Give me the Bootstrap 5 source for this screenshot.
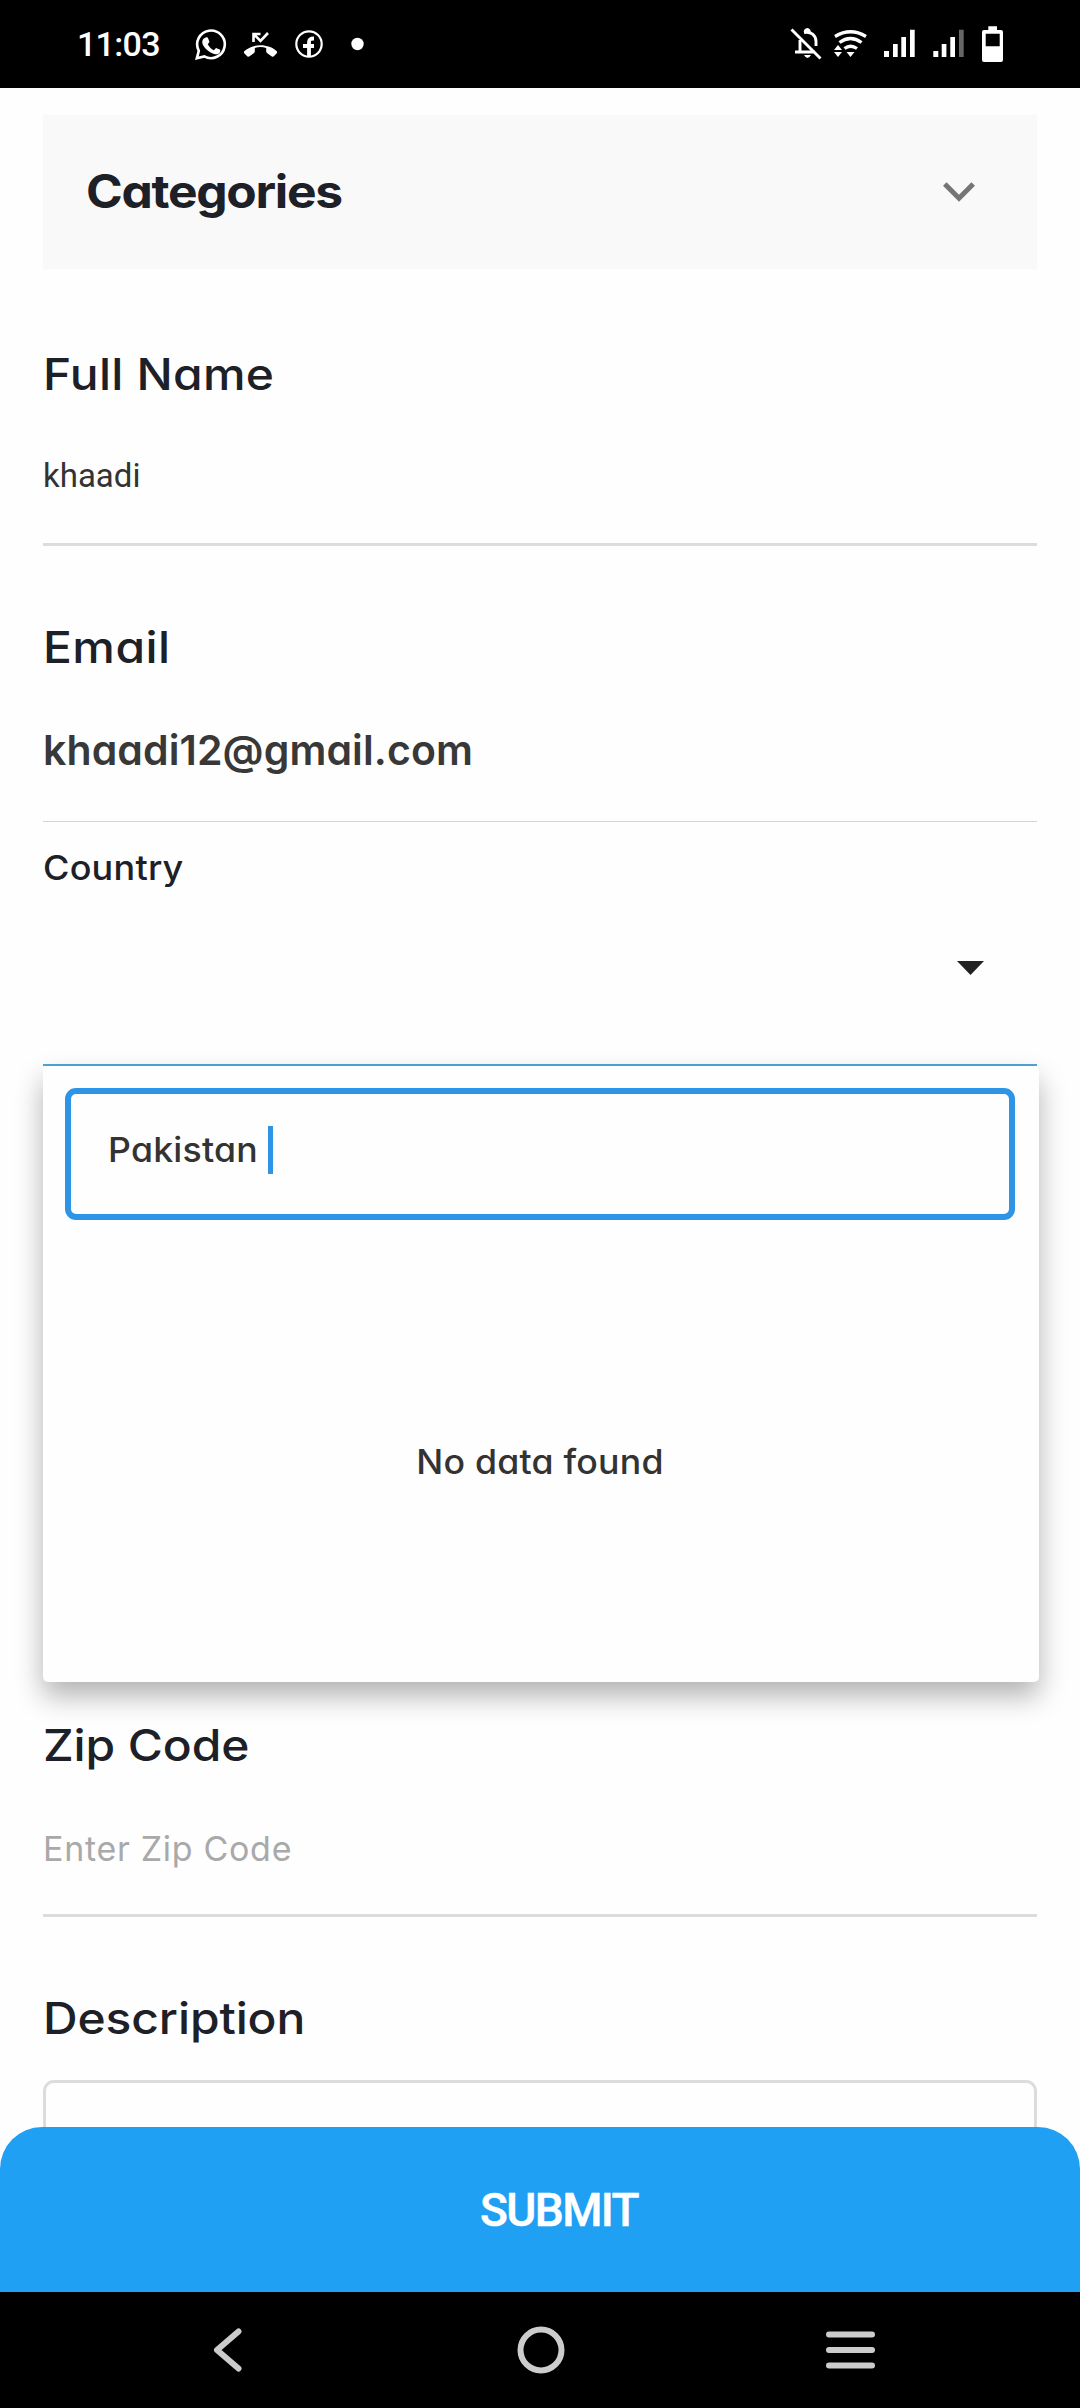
<!DOCTYPE html>
<html lang="en">
<head>
<meta charset="utf-8">
<meta name="viewport" content="width=device-width, initial-scale=1">
<title>Request form</title>
<link href="https://cdn.jsdelivr.net/npm/bootstrap@5.3.0/dist/css/bootstrap.min.css" rel="stylesheet">
<style>
  body { font-family: Inter, "Open Sans", sans-serif; font-feature-settings: "cv11"; background: #fefefe; color: #1d2027; height: 2408px; overflow: hidden; }
  input, button, textarea { font-feature-settings: inherit; }
  svg { display: block; flex: none; }
  .status-strip { height: 88px; padding-left: 77px; font-family: Roboto, sans-serif; background: #000; }
  .clock { font-size: 34px; line-height: 40px; font-weight: 500; letter-spacing: -.7px; width: 118px; }
  .screen { height: 2080px; padding: 27px 43px 0; overflow: hidden; }
  .category-box { height: 154px; background: #f9f9f9; padding: 0 62px 0 43px; }
  .category-title { font-size: 46px; font-weight: 700; letter-spacing: -1.2px; line-height: 60px; margin-bottom: 3px; transform: scaleX(1.08); transform-origin: left; }
  .field-label { display: block; font-size: 44px; line-height: 60px; font-weight: 500; margin: 71px 0 0; letter-spacing: -.1px; transform: scaleX(1.09); transform-origin: left; }
  .first-label { margin-top: 75px; letter-spacing: .2px; }
  .mail-label { letter-spacing: .4px; }
  .country-label { font-size: 34px; font-weight: 450; margin-top: 16px; letter-spacing: .2px; transform: scaleX(1.06); }
  .line-input, .line-input:focus { display: block; border: 0; border-bottom: 3px solid #dcdcdc; border-radius: 0; background: transparent; padding: 11px 0 4px; height: 142px; font-size: 34px; line-height: 50px; color: #333; box-shadow: none; letter-spacing: .7px; }
  .line-input.name-input { font-family: Roboto, sans-serif; font-size: 33px; letter-spacing: 0; padding: 9px 0 6px; }
  .line-input.mail-input { height: 145px; border-bottom: 1px solid #d5d6d7; padding: 1px 0 0; font-size: 41px; font-weight: 600; color: #383838; letter-spacing: .1px; }
  .line-input::placeholder { color: #a9a9a9; opacity: 1; }
  .country-select { height: 168px; border-bottom: 2px solid #4ea5dc; padding: 0 53px 26px 0; }
  .result-panel { top: 100%; left: 0; width: 996px; height: 616px; background: #fefefe; border-radius: 5px; padding: 22px 24px 0 22px; box-shadow: 0 14px 28px rgba(0,0,0,.3); z-index: 3; }
  .search-box { height: 132px; border: 6px solid #2e94e6; border-radius: 11px; padding: 0 37px 9px; font-size: 34px; font-weight: 500; color: #333; }
  .typed-text { transform: scaleX(1.05); transform-origin: left; letter-spacing: .2px; }
  .caret-bar { width: 5px; height: 48px; background: #2e94e6; margin-left: 17px; }
  .empty-note { font-size: 34px; font-weight: 500; line-height: 50px; color: #333; margin-top: 217px; letter-spacing: .2px; transform: scaleX(1.05); }
  .zip-label { margin-top: 649px; }
  .description-box { height: 300px; border: 3px solid #dcdcdc; border-radius: 11px; margin-top: 32px; resize: none; background: transparent; }
  .submit-bar { height: 165px; border: 0; border-radius: 42px 42px 0 0; background: #1fa0f3; color: #fff; font-family: Roboto, sans-serif; font-size: 46px; font-weight: 500; padding: 1px 0 0 38px; letter-spacing: -1.6px; -webkit-text-stroke: .5px #fff; }
  .system-nav { height: 116px; background: #000; padding: 0 205px 0 213px; }
  .home-ring { margin-left: 12px; }
</style>
</head>
<body>
<header class="status-strip text-white d-flex align-items-center">
  <span class="clock">11:03</span>
  <svg width="885" height="88" viewBox="195 0 885 88" fill="none" stroke="#fff">
    <path d="M196.800 58.300l2-7.500a13.800 13.800 0 1 1 5.500 5.600z" stroke-width="2.600"/>
    <path d="M206 38c2-1.500 3.500-1 4 .5l1.500 4-2 2.500c1.500 3 4 5.500 7 7l2.500-2.500c3 1.500 5 1.500 5 3-.5 4-4 4.500-6 4C211 55 204.500 49 203.300 44c-.4-3 .5-5 2.700-6z" transform="translate(25.500 5) scale(.87)" fill="#fff" stroke="none"/>
    <path d="M244.500 51c4-3.500 9.500-5.700 16-5.700s12 2.200 16 5.700c.8.800.8 1.700 0 2.500l-2.700 2.700c-.7.700-1.600.7-2.400.1l-4.400-3.200c-.6-.5-.8-1-.8-1.600V48c-3.800-1.200-7.600-1.200-11.400 0v3.500c0 .6-.2 1.100-.8 1.600l-4.400 3.200c-.8.600-1.700.6-2.400-.1l-2.700-2.700c-.8-.8-.8-1.700 0-2.500z" fill="#fff" stroke="none"/>
    <path d="M253.500 42V34h7M254 34.500l6.500 6.500 7.500-8" stroke-width="2.600"/>
    <circle cx="309" cy="44" r="12.700" stroke-width="2.200"/>
    <path d="M309 57V42.500c0-3.300 1.500-4 5-4M303 46h11" stroke-width="3.800"/>
    <circle cx="357.500" cy="44" r="6.200" fill="#fff" stroke="none"/>
    <path d="M791.500 29.500l29 29M795 52h20M800 51V40M804 32.500c7-1.500 12 3 12 9v4.500" stroke-width="2.900"/>
    <path d="M804 33v-3q3.500-4 6.500 0v3zM804 55h7q-3.500 6-7 0z" fill="#fff" stroke="none"/>
    <path d="M835 36.500q15.500-9.500 31 0M839.500 42.500q11-8 22 0M844.500 48.500q6-4.500 12.500 0" stroke-width="3.300"/>
    <path d="M846.500 52h8l-4 5zM834 50h8l-4-5zM834 52h8l-4 5z" fill="#fff" stroke="none"/>
    <g fill="#fff" stroke="none">
      <path d="M884 51h5v6h-5zM893 44h4.700v13H893zM901.300 37h4.700v20h-4.700zM910 29.700h4.700V57H910zM933.300 51h5v6h-5zM941.700 44h4.700v13h-4.700zM950.300 37h4.700v20h-4.700z"/>
      <path d="M959 29.700h4.700V57H959z" fill="#666"/>
      <path fill-rule="evenodd" d="M988.300 26.300h8.700V30h4q2 0 2 2v28q0 2-2 2h-17q-2 0-2-2V32q0-2 2-2h4.300zM985.700 33.700v12.500h14V33.700z"/>
    </g>
  </svg>
</header>

<main class="screen">
  <div class="category-box d-flex align-items-center justify-content-between">
    <span class="category-title">Categories</span>
    <svg width="32" height="20" viewBox="0 0 32 20"><path d="M1.800 2L16 16.200 30.200 2" fill="none" stroke="#757575" stroke-width="5"/></svg>
  </div>

  <form>
    <label class="field-label first-label" for="fullName">Full Name</label>
    <input id="fullName" class="form-control line-input name-input" value="khaadi">

    <label class="field-label mail-label" for="email">Email</label>
    <input id="email" class="form-control line-input mail-input" value="khaadi12@gmail.com">

    <div class="position-relative">
      <label class="field-label country-label">Country</label>
      <div class="country-select d-flex align-items-center justify-content-end">
        <svg width="27" height="14" viewBox="0 0 27 14"><path d="M0 0h27L13.500 14z" fill="#212121"/></svg>
      </div>
      <div class="result-panel position-absolute">
        <div class="search-box d-flex align-items-center"><span class="typed-text">Pakistan</span><span class="caret-bar"></span></div>
        <p class="empty-note text-center mb-0">No data found</p>
      </div>
    </div>

    <label class="field-label zip-label" for="zip">Zip Code</label>
    <input id="zip" class="form-control line-input" placeholder="Enter Zip Code">

    <label class="field-label" for="about">Description</label>
    <textarea id="about" class="form-control description-box"></textarea>
  </form>
</main>

<footer class="fixed-bottom">
  <button type="button" class="submit-bar d-block w-100 text-center">SUBMIT</button>
  <nav class="system-nav d-flex align-items-center justify-content-between">
    <svg width="30" height="48" viewBox="0 0 30 48"><path d="M25.500 5.500L4 24l21.500 18.500" fill="none" stroke="#ccc" stroke-width="6" stroke-linecap="round" stroke-linejoin="round"/></svg>
    <svg class="home-ring" width="48" height="48" viewBox="0 0 48 48"><circle cx="24" cy="24" r="20.500" fill="none" stroke="#ccc" stroke-width="6"/></svg>
    <svg width="49" height="38" viewBox="0 0 49 38"><path d="M3 3.500h43M3 19h43M3 34.500h43" stroke="#ccc" stroke-width="6" stroke-linecap="round"/></svg>
  </nav>
</footer>
<script src="https://cdn.jsdelivr.net/npm/bootstrap@5.3.0/dist/js/bootstrap.bundle.min.js"></script>
</body>
</html>
